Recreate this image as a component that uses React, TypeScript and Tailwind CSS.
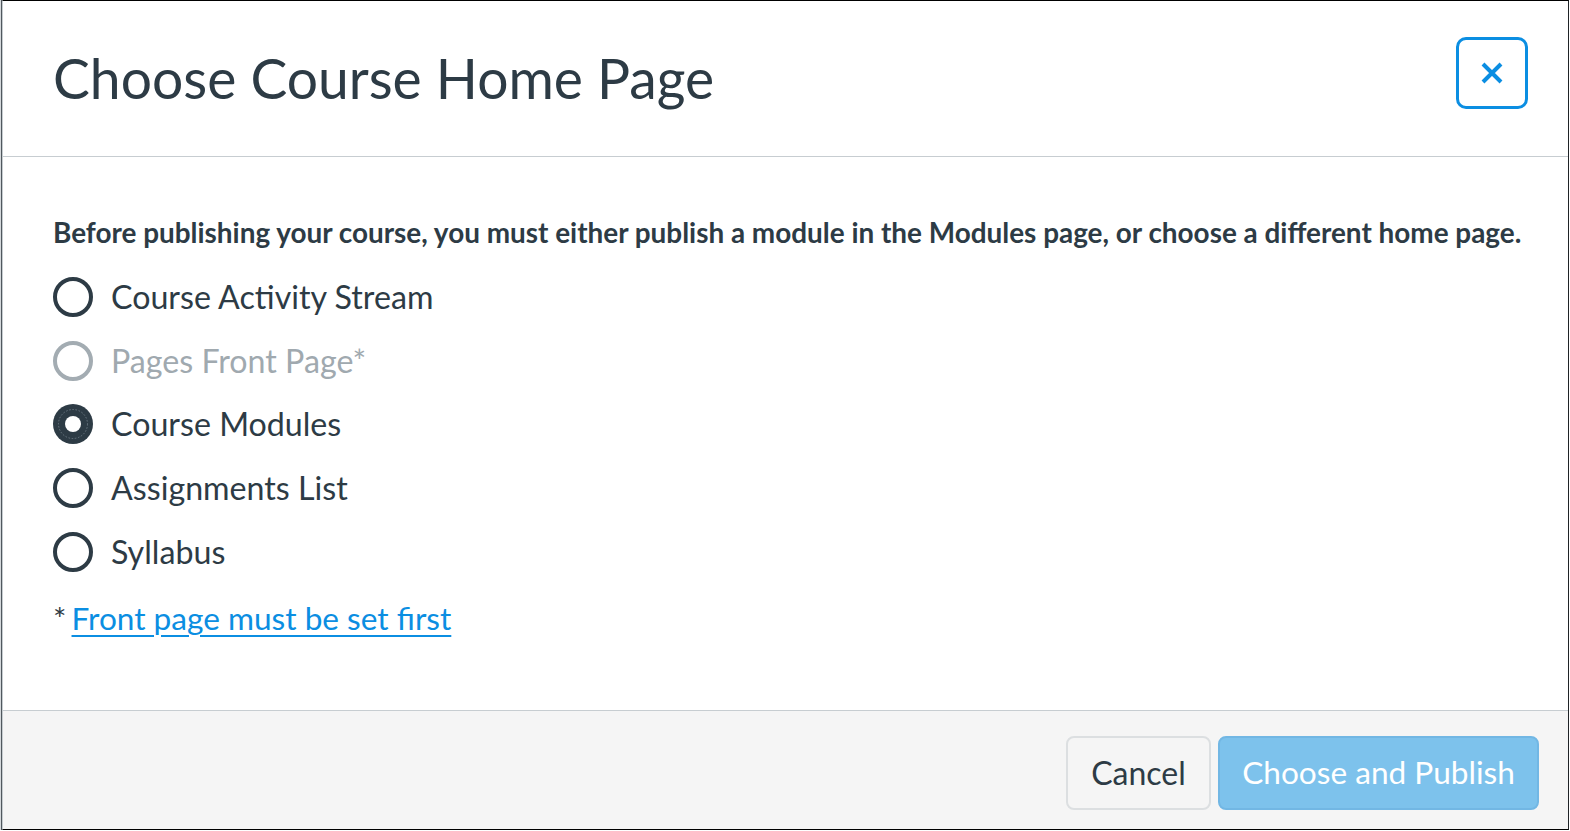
import React from "react";

type Option = { label: string; checked?: boolean; disabled?: boolean };

const options: Option[] = [
  { label: "Course Activity Stream" },
  { label: "Pages Front Page*", disabled: true },
  { label: "Course Modules", checked: true },
  { label: "Assignments List" },
  { label: "Syllabus" },
];

function RadioMark({ checked, disabled }: { checked?: boolean; disabled?: boolean }) {
  if (checked) {
    return (
      <svg width="40" height="40" viewBox="0 0 40 40" className="shrink-0">
        <circle cx="20" cy="20" r="20" fill="#2d3b45" />
        <circle cx="20" cy="20" r="14.5" fill="none" stroke="#7d8a93" strokeWidth="0.7" strokeDasharray="1.6 1.6" />
        <circle cx="20" cy="20" r="8" fill="#ffffff" />
      </svg>
    );
  }
  return (
    <span
      className={
        "block w-[40px] h-[40px] rounded-full border-[4px] bg-white shrink-0 " +
        (disabled ? "border-[#a3acb2]" : "border-[#2d3b45]")
      }
    />
  );
}

export default function App() {
  return (
    <div className="w-[1569px] h-[830px] bg-white border-l border-l-[#d4d8db] font-['Lato',sans-serif] text-[#2d3b45]">
      <div className="h-full border-l border-l-[#50585e]">
        <div className="h-full flex flex-col border-l border-l-[#c7cdd1] border-t border-t-black border-r border-r-[#1f2326] border-b border-b-black">
          {/* header */}
          <div className="h-[156px] shrink-0 flex items-start justify-between border-b border-b-[#c7cdd1] pl-[50px] pr-[40px]">
            <h1 className="self-center text-[55.2px] leading-none font-normal mt-[1px]">
              Choose Course Home Page
            </h1>
            <button
              type="button"
              aria-label="Close"
              className="mt-[36px] w-[72px] h-[72px] rounded-[10px] border-[3px] border-[#0b8ee2] flex items-center justify-center bg-white"
            >
              <svg width="22" height="22" viewBox="0 0 22 22">
                <path d="M2 2 L20 20 M20 2 L2 20" stroke="#0b8ee2" strokeWidth="4" strokeLinecap="butt" />
              </svg>
            </button>
          </div>

          {/* body */}
          <div className="flex-1 pl-[50px] pr-[40px] pt-[57px]">
            <p className="text-[27.9px] leading-[36px] font-bold whitespace-nowrap">
              Before publishing your course, you must either publish a module in the Modules page, or choose a different home page.
            </p>
            <div className="mt-[15px] flex flex-col">
              {options.map((o) => (
                <label
                  key={o.label}
                  className={
                    "h-[63.75px] flex items-center gap-[18px] text-[32.2px] " +
                    (o.disabled ? "text-[#a0a9af]" : "text-[#2d3b45]")
                  }
                >
                  <RadioMark checked={o.checked} disabled={o.disabled} />
                  <span className="leading-none">{o.label}</span>
                </label>
              ))}
            </div>
            <p className="mt-[4px] text-[31.6px] leading-[60px]">
              <span className="mr-[-3px]">* </span>
              <a href="#" className="text-[#0b8ee2] underline underline-offset-[5px] decoration-[2px]">
                Front page must be set first
              </a>
            </p>
          </div>

          {/* footer */}
          <div className="h-[119px] shrink-0 bg-[#f5f5f5] border-t border-t-[#c7cdd1] flex items-start justify-end gap-[7px] pt-[25px] pr-[29px]">
            <button
              type="button"
              className="h-[74px] w-[145px] rounded-[8px] border-[2px] border-[#dcdfe1] bg-[#f5f5f5] text-[32px] text-[#2d3b45]"
            >
              Cancel
            </button>
            <button
              type="button"
              className="h-[74px] w-[321px] rounded-[8px] border-[2px] border-[#72b7e4] bg-[#7dc2ec] text-[31.6px] text-white"
            >
              Choose and Publish
            </button>
          </div>
        </div>
      </div>
    </div>
  );
}
